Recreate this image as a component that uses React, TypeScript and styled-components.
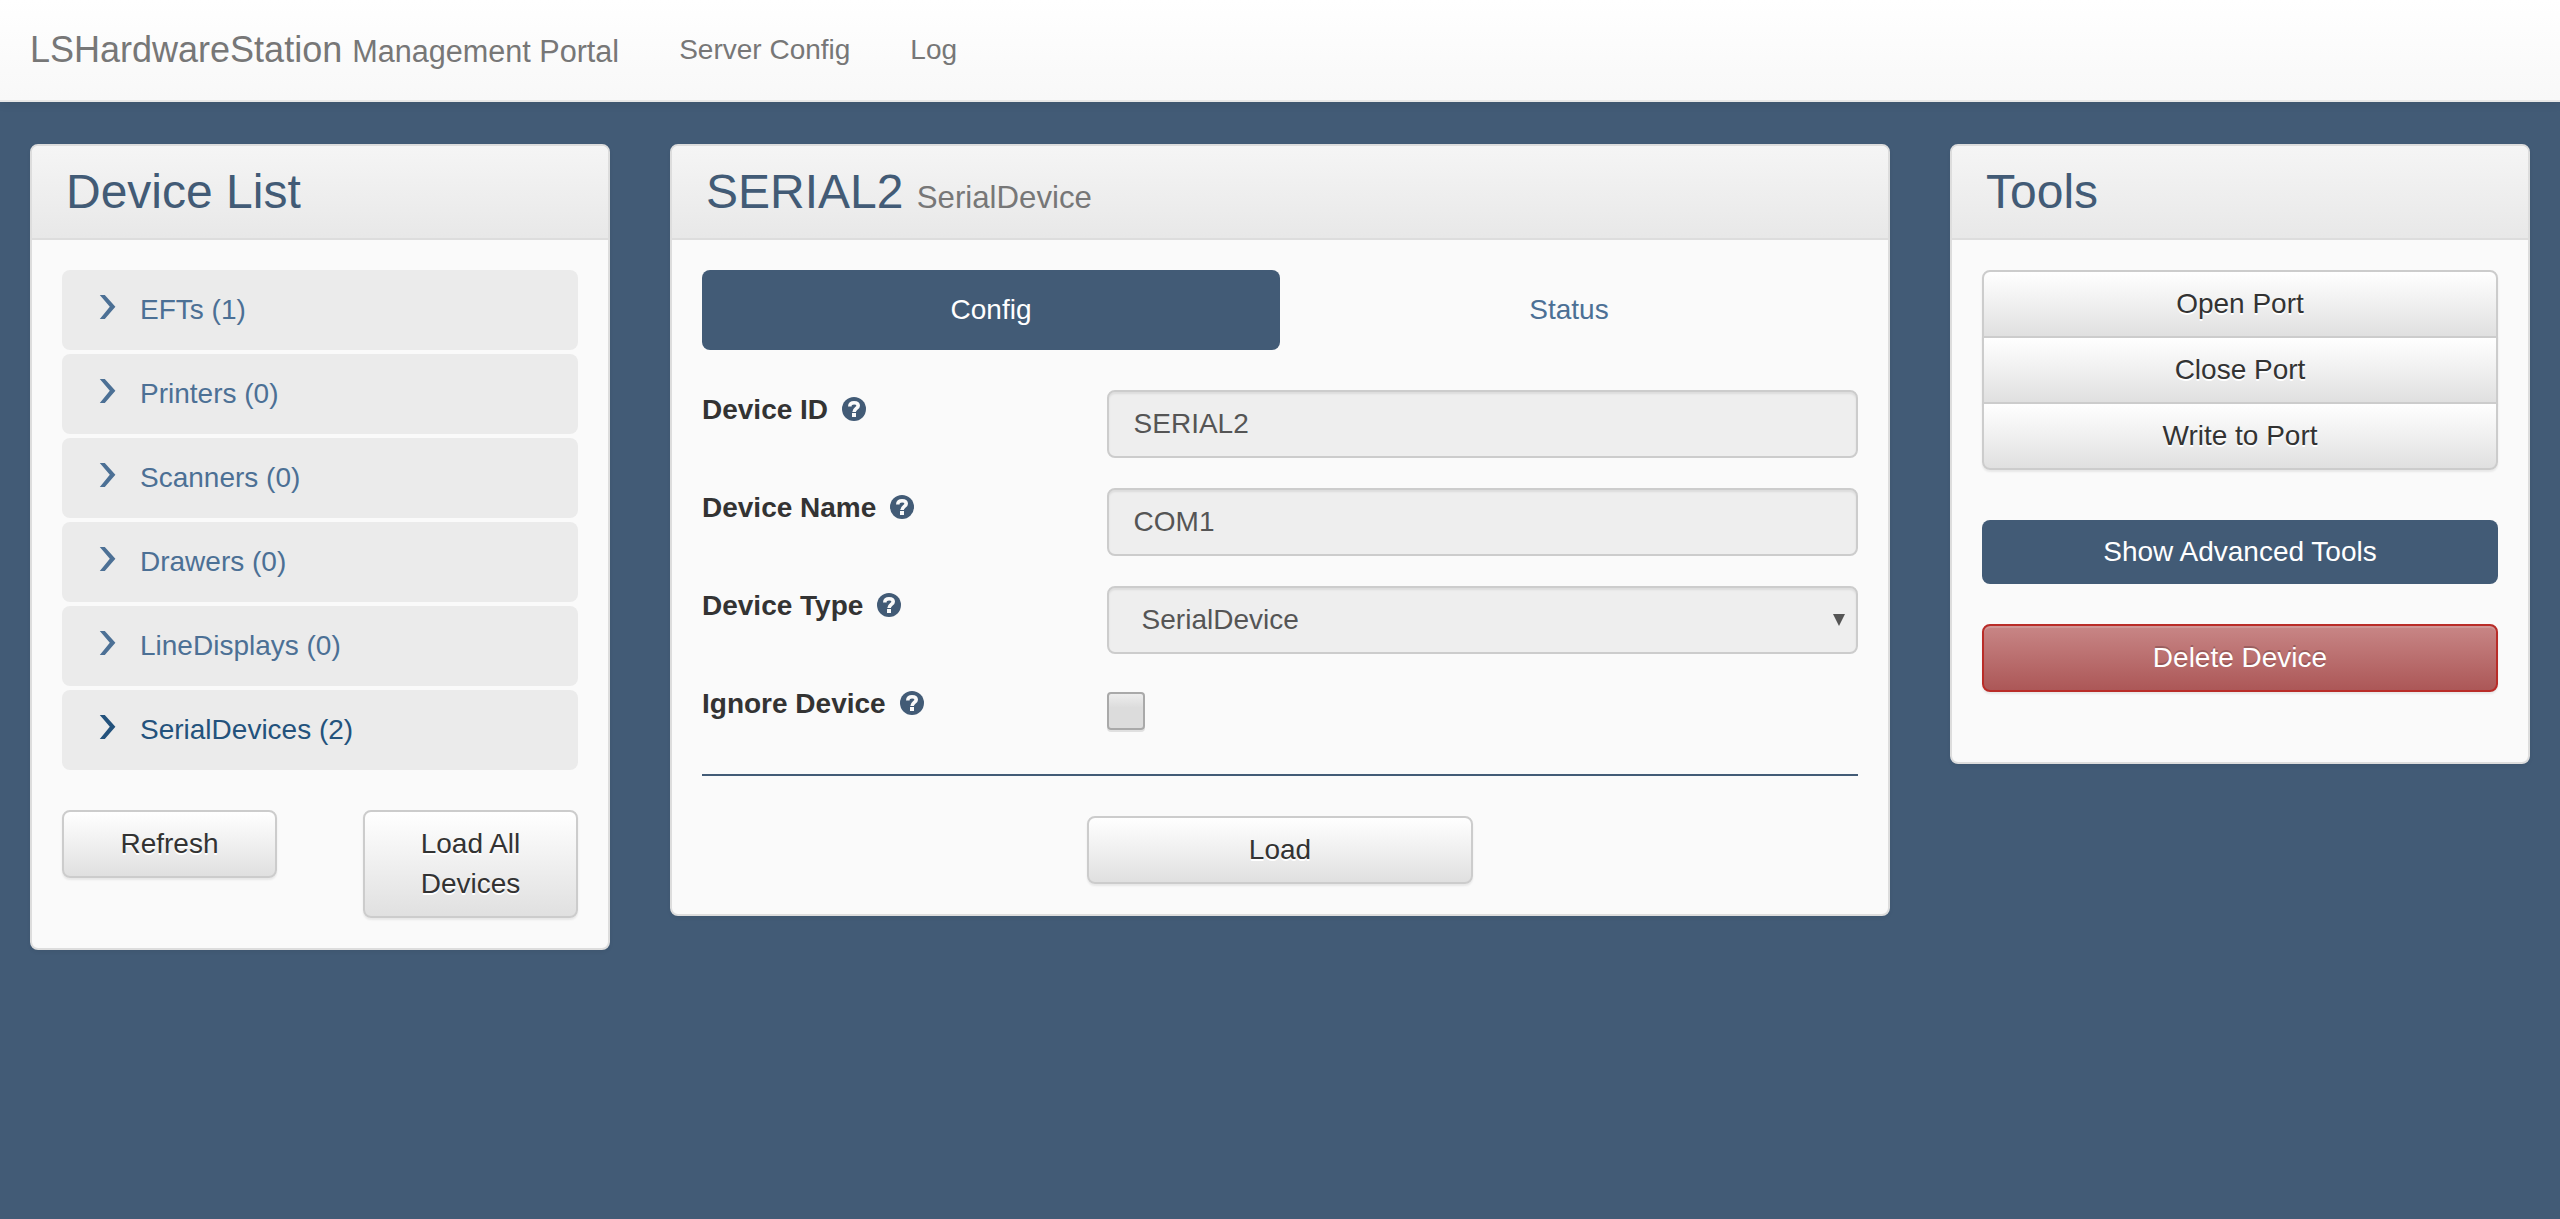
import React from "react";
import styled, { createGlobalStyle, css } from "styled-components";

const brand = "#425b76";
const link = "#4c7095";

const GlobalStyle = createGlobalStyle`
  * { box-sizing: border-box; }
  body {
    margin: 0;
    min-height: 100vh;
    background: ${brand};
    color: #333;
    font-family: "Liberation Sans", Arial, sans-serif;
    font-size: 28px;
    line-height: 40px;
  }
`;

const Navbar = styled.nav`
  display: flex;
  align-items: stretch;
  height: 102px;
  background: linear-gradient(to bottom, #fff 0%, #f8f8f8 100%);
  border-bottom: 2px solid #e7e7e7;
  box-shadow: 0 2px 10px rgba(0, 0, 0, 0.075);
  color: #777;
`;

const Brand = styled.a`
  padding: 30px;
  font-size: 36px;
  line-height: 40px;
  white-space: nowrap;

  small {
    font-size: 85%;
  }
`;

const NavLink = styled.a`
  padding: 30px;
  white-space: nowrap;
`;

const Columns = styled.main`
  display: grid;
  grid-template-columns: 580px 1220px 580px;
  column-gap: 60px;
  align-items: start;
  padding: 42px 30px 0;
`;

const Panel = styled.section`
  background: #fafafa;
  border: 2px solid #ddd;
  border-radius: 8px;
  box-shadow: 0 2px 4px rgba(0, 0, 0, 0.05);
`;

const PanelHeading = styled.header`
  height: 94px;
  padding: 20px 34px;
  border-bottom: 2px solid #ddd;
  border-radius: 6px 6px 0 0;
  background: linear-gradient(to bottom, #f5f5f5 0%, #e8e8e8 100%);
`;

const PanelTitle = styled.h3`
  margin: 0;
  font-size: 48px;
  font-weight: 400;
  line-height: 52px;
  color: ${brand};

  small {
    font-size: 65%;
    color: #777;
  }
`;

const PanelBody = styled.div<{ $bottom?: number }>`
  padding: 30px 30px ${(p) => p.$bottom ?? 30}px;
`;

const DeviceList = styled.ul`
  display: flex;
  flex-direction: column;
  gap: 4px;
  margin: 0 0 40px;
  padding: 0;
  list-style: none;
`;

const DeviceItem = styled.li<{ $active?: boolean }>`
  display: flex;
  align-items: flex-start;
  height: 80px;
  padding: 20px 37px;
  border-radius: 8px;
  background: #ebebeb;
  color: ${(p) => (p.$active ? "#23527c" : link)};
`;

const ChevronSvg = styled.svg`
  width: 17px;
  height: 24px;
  margin: 5px 24px 0 0;
  flex: none;
`;

const Split = styled.div`
  display: flex;
  justify-content: space-between;
  align-items: flex-start;
`;

const buttonBase = css`
  display: block;
  margin: 0;
  padding: 12px 24px;
  border: 2px solid #ccc;
  border-radius: 8px;
  font: inherit;
  text-align: center;
`;

const Button = styled.button<{ $width?: string }>`
  ${buttonBase}
  width: ${(p) => p.$width ?? "100%"};
  color: #333;
  background: linear-gradient(to bottom, #fff 0%, #e0e0e0 100%);
  text-shadow: 0 2px 0 #fff;
  box-shadow: inset 0 2px 0 rgba(255, 255, 255, 0.15), 0 2px 2px rgba(0, 0, 0, 0.075);
`;

const PrimaryButton = styled.button`
  ${buttonBase}
  width: 100%;
  margin: 50px 0 40px;
  border: 0;
  color: #fff;
  background: ${brand};
`;

const DangerButton = styled.button`
  ${buttonBase}
  width: 100%;
  border-color: #b92c28;
  color: #fff;
  background: linear-gradient(to bottom, #c88686 0%, #ac5757 100%);
  text-shadow: 0 -2px 0 rgba(0, 0, 0, 0.2);
  box-shadow: inset 0 2px 0 rgba(255, 255, 255, 0.15), 0 2px 2px rgba(0, 0, 0, 0.075);
`;

const ButtonGroup = styled.div`
  display: flex;
  flex-direction: column;

  ${Button} {
    border-radius: 0;
  }
  ${Button}:first-child {
    border-radius: 8px 8px 0 0;
  }
  ${Button}:last-child {
    border-radius: 0 0 8px 8px;
  }
  ${Button} + ${Button} {
    margin-top: -2px;
  }
`;

const Tabs = styled.div`
  display: grid;
  grid-template-columns: 1fr 1fr;
  margin-bottom: 40px;
`;

const Tab = styled.a<{ $active?: boolean }>`
  padding: 20px 30px;
  border-radius: 8px;
  text-align: center;
  color: ${(p) => (p.$active ? "#fff" : link)};
  background: ${(p) => (p.$active ? brand : "transparent")};
`;

const FormRow = styled.div`
  display: grid;
  grid-template-columns: 35% 65%;
  align-items: start;
  height: 68px;
  margin-bottom: 30px;
`;

const Label = styled.label`
  display: flex;
  align-items: flex-start;
  gap: 14px;
  font-weight: 700;
`;

const HelpSvg = styled.svg`
  width: 24px;
  height: 24px;
  margin-top: 7px;
`;

const Field = styled.div<{ $select?: boolean }>`
  display: flex;
  justify-content: space-between;
  align-items: center;
  height: 68px;
  padding: 12px ${(p) => (p.$select ? 11 : 24)}px 12px ${(p) => (p.$select ? 33 : 25)}px;
  border: 2px solid #ccc;
  border-radius: 8px;
  background: #eee;
  color: #555;
  box-shadow: inset 0 2px 2px rgba(0, 0, 0, 0.075);
`;

const Checkbox = styled.span`
  width: 38px;
  height: 38px;
  margin-top: 8px;
  border: 2px solid #a9a9a9;
  border-radius: 4px;
  background: linear-gradient(to bottom, #ededed 0%, #dcdcdc 40%, #dcdcdc 100%);
  box-shadow: 0 2px 0 rgba(0, 0, 0, 0.1);
`;

const Divider = styled.hr`
  height: 2px;
  margin: -8px 0 40px;
  border: 0;
  background: ${brand};
`;

const Centered = styled.div`
  display: flex;
  justify-content: center;
`;

const Chevron = () => (
  <ChevronSvg viewBox="0 0 17 24">
    <path d="M0.8 0H5.8L16.4 11.8L5.8 24H0.8L10.8 11.8Z" fill="currentColor" />
  </ChevronSvg>
);

const HelpIcon = () => (
  <HelpSvg viewBox="0 0 24 24">
    <circle cx="12" cy="12" r="12" fill={brand} />
    <path
      d="M7.8 9.4C7.8 6.9 9.4 5.7 12 5.7C14.6 5.7 16.2 6.9 16.2 8.7C16.2 11.4 12.1 11.6 12.1 15"
      fill="none"
      stroke="#fafafa"
      strokeWidth="3.6"
    />
    <rect x="10" y="16" width="4" height="4" fill="#fafafa" />
  </HelpSvg>
);

const DropArrow = () => (
  <svg width="12" height="12" viewBox="0 0 12 12">
    <path d="M0 0H12L6 12Z" fill="#555" />
  </svg>
);

const devices = [
  "EFTs (1)",
  "Printers (0)",
  "Scanners (0)",
  "Drawers (0)",
  "LineDisplays (0)",
  "SerialDevices (2)",
];

const FieldLabel = ({ children }: { children: string }) => (
  <Label>
    {children}
    <HelpIcon />
  </Label>
);

export default function App() {
  return (
    <>
      <GlobalStyle />
      <Navbar>
        <Brand>
          LSHardwareStation <small>Management Portal</small>
        </Brand>
        <NavLink>Server Config</NavLink>
        <NavLink>Log</NavLink>
      </Navbar>
      <Columns>
        <Panel>
          <PanelHeading>
            <PanelTitle>Device List</PanelTitle>
          </PanelHeading>
          <PanelBody>
            <DeviceList>
              {devices.map((name, i) => (
                <DeviceItem key={name} $active={i === devices.length - 1}>
                  <Chevron />
                  {name}
                </DeviceItem>
              ))}
            </DeviceList>
            <Split>
              <Button $width="215px">Refresh</Button>
              <Button $width="215px">Load All Devices</Button>
            </Split>
          </PanelBody>
        </Panel>

        <Panel>
          <PanelHeading>
            <PanelTitle>
              SERIAL2 <small>SerialDevice</small>
            </PanelTitle>
          </PanelHeading>
          <PanelBody>
            <Tabs>
              <Tab $active>Config</Tab>
              <Tab>Status</Tab>
            </Tabs>
            <FormRow>
              <FieldLabel>Device ID</FieldLabel>
              <Field>SERIAL2</Field>
            </FormRow>
            <FormRow>
              <FieldLabel>Device Name</FieldLabel>
              <Field>COM1</Field>
            </FormRow>
            <FormRow>
              <FieldLabel>Device Type</FieldLabel>
              <Field $select>
                SerialDevice
                <DropArrow />
              </Field>
            </FormRow>
            <FormRow>
              <FieldLabel>Ignore Device</FieldLabel>
              <Checkbox />
            </FormRow>
            <Divider />
            <Centered>
              <Button $width="33.333%">Load</Button>
            </Centered>
          </PanelBody>
        </Panel>

        <Panel>
          <PanelHeading>
            <PanelTitle>Tools</PanelTitle>
          </PanelHeading>
          <PanelBody $bottom={70}>
            <ButtonGroup>
              <Button>Open Port</Button>
              <Button>Close Port</Button>
              <Button>Write to Port</Button>
            </ButtonGroup>
            <PrimaryButton>Show Advanced Tools</PrimaryButton>
            <DangerButton>Delete Device</DangerButton>
          </PanelBody>
        </Panel>
      </Columns>
    </>
  );
}
